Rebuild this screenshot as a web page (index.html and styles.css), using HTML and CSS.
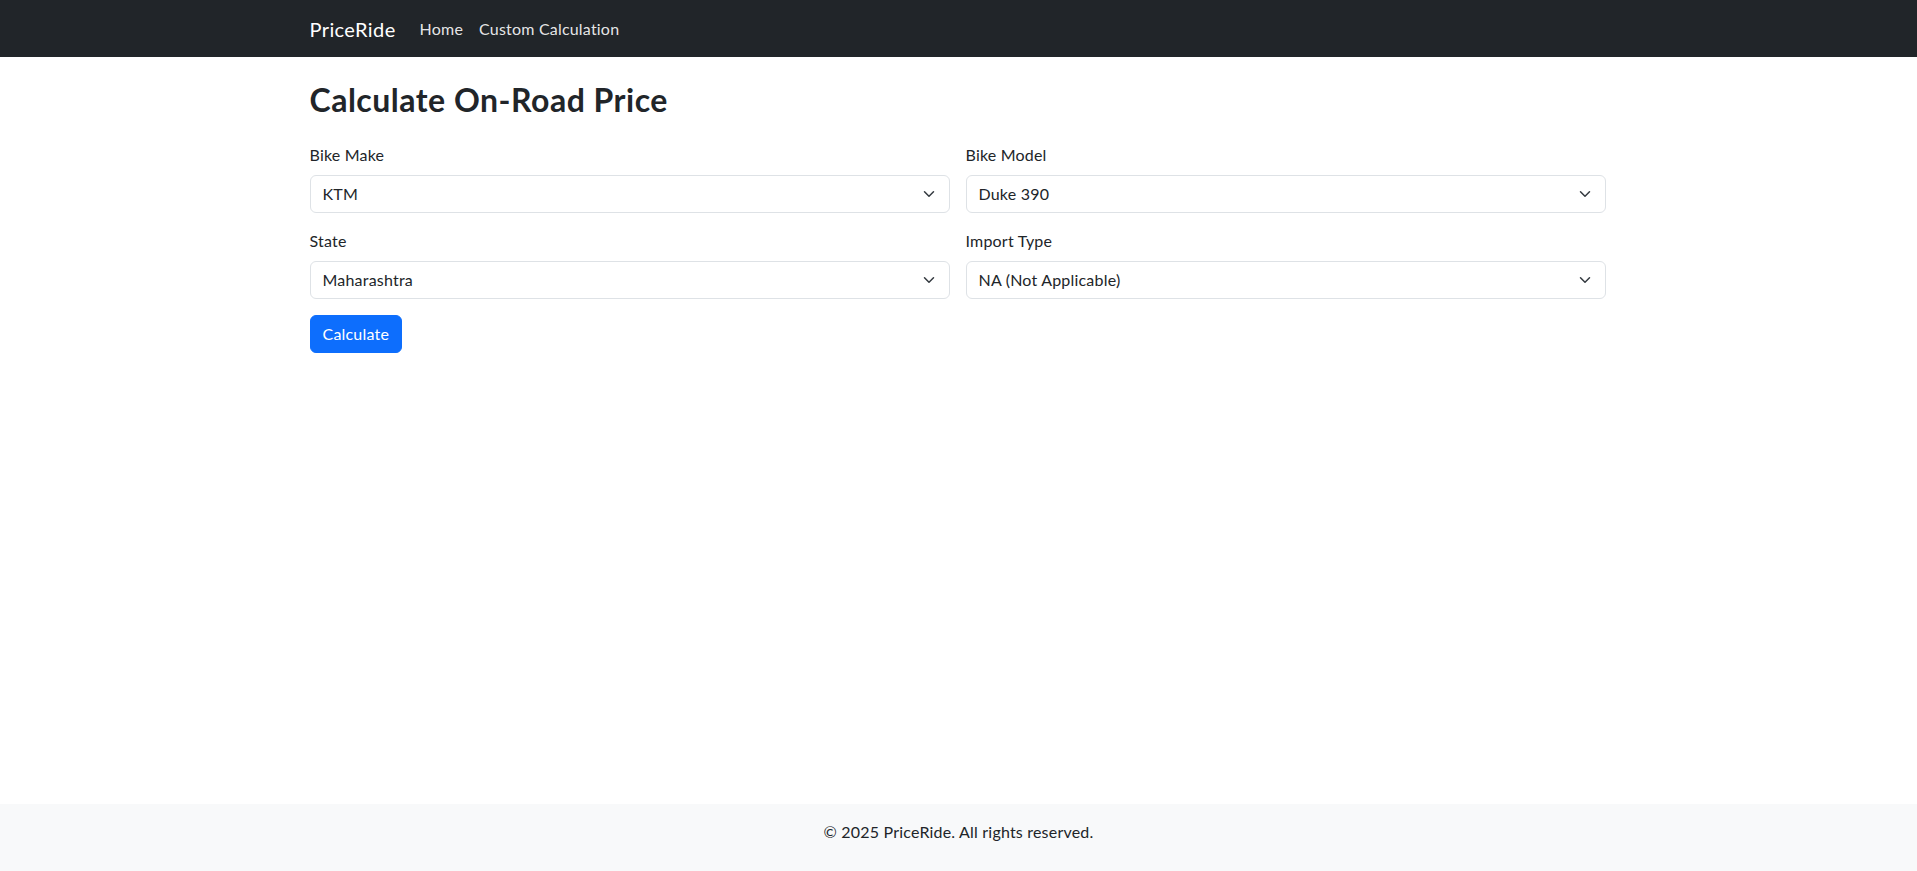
FILE: index.html
```html
<!DOCTYPE html>
<html lang="en">
<head>
<meta charset="utf-8">
<title>PriceRide</title>
<link rel="stylesheet" href="styles.css">
</head>
<body>
<nav class="navbar">
  <div class="container nav-inner">
    <a class="brand" href="#">PriceRide</a>
    <ul class="nav-links">
      <li><a href="#">Home</a></li>
      <li><a href="#">Custom Calculation</a></li>
    </ul>
  </div>
</nav>
<main class="container main">
  <h2 class="title">Calculate On-Road Price</h2>
  <form class="form-grid">
    <div class="field">
      <label class="form-label">Bike Make</label>
      <div class="form-select"><span>KTM</span><svg width="16" height="12" viewBox="0 0 16 16"><path fill="none" stroke="#343a40" stroke-linecap="round" stroke-linejoin="round" stroke-width="2" d="m2 5 6 6 6-6"/></svg></div>
    </div>
    <div class="field">
      <label class="form-label">Bike Model</label>
      <div class="form-select"><span>Duke 390</span><svg width="16" height="12" viewBox="0 0 16 16"><path fill="none" stroke="#343a40" stroke-linecap="round" stroke-linejoin="round" stroke-width="2" d="m2 5 6 6 6-6"/></svg></div>
    </div>
    <div class="field">
      <label class="form-label">State</label>
      <div class="form-select"><span>Maharashtra</span><svg width="16" height="12" viewBox="0 0 16 16"><path fill="none" stroke="#343a40" stroke-linecap="round" stroke-linejoin="round" stroke-width="2" d="m2 5 6 6 6-6"/></svg></div>
    </div>
    <div class="field">
      <label class="form-label">Import Type</label>
      <div class="form-select"><span>NA (Not Applicable)</span><svg width="16" height="12" viewBox="0 0 16 16"><path fill="none" stroke="#343a40" stroke-linecap="round" stroke-linejoin="round" stroke-width="2" d="m2 5 6 6 6-6"/></svg></div>
    </div>
    <div class="field full">
      <button type="button" class="btn-primary">Calculate</button>
    </div>
  </form>
</main>
<footer class="footer">
  <p>© 2025 PriceRide. All rights reserved.</p>
</footer>
</body>
</html>
```
FILE: styles.css
```css
* { box-sizing: border-box; }
html, body { height: 100%; }
body {
  margin: 0;
  font-family: Lato, "Noto Sans", sans-serif;
  font-size: 16px;
  line-height: 1.5;
  letter-spacing: 0.2px;
  color: #212529;
  background: #fff;
  display: flex;
  flex-direction: column;
  min-height: 100vh;
}
.container {
  width: 1320px;
  margin: 0 auto;
  padding: 0 13px 0 11px;
}
.navbar {
  background: #212529;
  height: 57px;
  display: flex;
  align-items: center;
}
.nav-inner {
  display: flex;
  align-items: center;
}
.brand {
  color: #fff;
  text-decoration: none;
  font-size: 20px;
  line-height: 30px;
  letter-spacing: 0.4px;
  margin-right: 16px;
}
.nav-links {
  list-style: none;
  margin: 0;
  padding: 0;
  display: flex;
}
.nav-links a {
  display: block;
  padding: 8px 8px;
  color: rgba(255,255,255,0.9);
  text-decoration: none;
}
.main {
  flex: 1 0 auto;
  padding-top: 24px;
}
.title {
  margin: 0 0 24px;
  font-size: 32px;
  font-weight: 700;
  line-height: 1.2;
  letter-spacing: 0.5px;
}
.form-grid {
  display: grid;
  grid-template-columns: 1fr 1fr;
  column-gap: 16px;
  row-gap: 16px;
}
.field.full { grid-column: 1 / -1; }
.form-label {
  display: block;
  margin-bottom: 8px;
}
.form-select {
  height: 38px;
  display: flex;
  align-items: center;
  justify-content: space-between;
  padding: 6px 12px;
  border: 1px solid #dee2e6;
  border-radius: 6px;
  background: #fff;
}
.btn-primary {
  font-family: inherit;
  font-size: 16px;
  line-height: 24px;
  letter-spacing: 0.2px;
  color: #fff;
  background: #0d6efd;
  border: 1px solid #0d6efd;
  border-radius: 6px;
  padding: 6px 12px;
}
.footer {
  background: #f8f9fa;
  padding: 16px 0 27px;
  text-align: center;
}
.footer p { margin: 0; }
```
